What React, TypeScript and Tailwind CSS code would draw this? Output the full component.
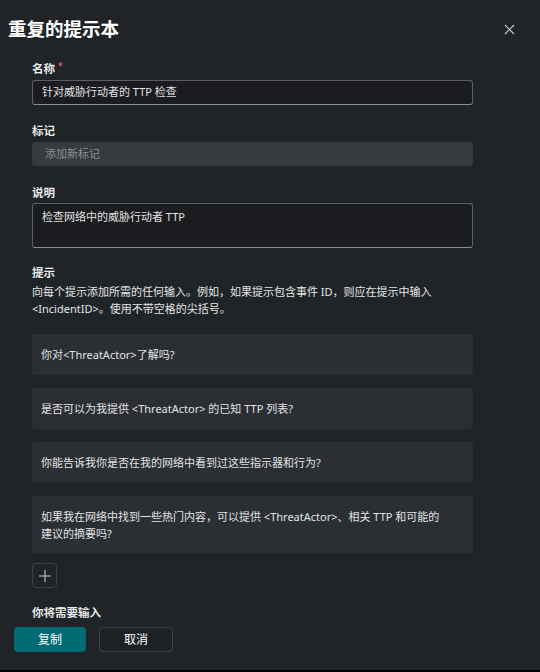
import React from 'react';

const prompts: string[][] = [
  ['你对<ThreatActor>了解吗?'],
  ['是否可以为我提供 <ThreatActor> 的已知 TTP 列表?'],
  ['你能告诉我你是否在我的网络中看到过这些指示器和行为?'],
  ['如果我在网络中找到一些热门内容，可以提供 <ThreatActor>、相关 TTP 和可能的', '建议的摘要吗?'],
];

const Label: React.FC<{ text: string; required?: boolean }> = ({ text, required }) => (
  <div className="flex h-[16px] items-center text-[11.5px] font-semibold leading-[16px] text-[#e8e8e8]">
    {text}
    {required && <span className="ml-[3px] -mt-[6px] text-[8px] text-[#d36a6a]">*</span>}
  </div>
);

const App: React.FC = () => {
  return (
    <div
      className="h-[672px] w-[540px] bg-black"
      style={{ fontFamily: '"Noto Sans", "Noto Sans CJK SC", sans-serif' }}
    >
      <div className="flex h-[670px] flex-col bg-[#212427] text-[#e2e2e2]">
        <div className="flex h-[58px] items-center justify-between pl-[8px] pr-[25px]">
          <h1 className="text-[18.5px] font-bold leading-[24px] text-white">重复的提示本</h1>
          <svg width="11" height="11" viewBox="0 0 11 11" className="text-[#c4c6c8]">
            <path d="M1 1 L10 10 M10 1 L1 10" stroke="currentColor" strokeWidth="1.2" />
          </svg>
        </div>

        <div className="ml-[32px] mt-[3px] flex w-[441px] flex-col">
          <Label text="名称" required />
          <div className="mt-[3px] flex h-[25px] items-center rounded-[3px] border border-[#5b5f64] border-b-[#8a8e93] bg-[#1a1c1f] px-[9px] text-[11px]">
            针对威胁行动者的 TTP 检查
          </div>

          <div className="mt-[18px]">
            <Label text="标记" />
          </div>
          <div className="mt-[3px] flex h-[24px] items-center rounded-[3px] bg-[#363b40] px-[13px] text-[11px] text-[#8d9196]">
            添加新标记
          </div>

          <div className="mt-[19px]">
            <Label text="说明" />
          </div>
          <div className="mt-[2px] h-[45px] rounded-[3px] border border-[#5b5f64] border-b-[#8a8e93] bg-[#1a1c1f] px-[9px] pt-[5px] text-[11px] leading-[16px]">
            检查网络中的威胁行动者 TTP
          </div>

          <div className="mt-[17px]">
            <Label text="提示" />
          </div>
          <p className="mt-[2px] text-[11px] leading-[17px] text-[#e4e4e4]">
            向每个提示添加所需的任何输入。例如，如果提示包含事件 ID，则应在提示中输入
            <br />
            &lt;IncidentID&gt;。使用不带空格的尖括号。
          </p>

          <div className="mt-[17px] flex flex-col gap-[13px]">
            {prompts.map((lines, i) => (
              <div
                key={i}
                className={
                  lines.length > 1
                    ? 'rounded-[3px] bg-[#2b2f33] px-[9px] pt-[12px] pb-[11px] text-[11px] leading-[17px]'
                    : 'flex h-[41px] items-center rounded-[3px] bg-[#2b2f33] px-[9px] text-[11px] leading-[17px]'
                }
              >
                <div>
                  {lines.map((l, j) => (
                    <div key={j} className="whitespace-nowrap">
                      {l}
                    </div>
                  ))}
                </div>
              </div>
            ))}
          </div>

          <button className="mt-[10px] flex h-[25px] w-[25px] items-center justify-center rounded-[4px] border border-[#3d4146] bg-[#212427]">
            <svg width="14" height="14" viewBox="0 0 14 14" className="text-[#c2c4c6]">
              <path d="M7 1 V13 M1 7 H13" stroke="currentColor" strokeWidth="1.1" />
            </svg>
          </button>

          <div className="mt-[17px]">
            <Label text="你将需要输入" />
          </div>
        </div>

        <div className="ml-[14px] mt-[6px] flex gap-[13px]">
          <button className="flex h-[25px] w-[72px] items-center justify-center rounded-[4px] bg-[#006b72] text-[12px] text-white">
            复制
          </button>
          <button className="flex h-[25px] w-[74px] items-center justify-center rounded-[4px] border border-[#3b3f44] bg-[#1e2124] text-[12px] text-white">
            取消
          </button>
        </div>
      </div>
    </div>
  );
};

export default App;
